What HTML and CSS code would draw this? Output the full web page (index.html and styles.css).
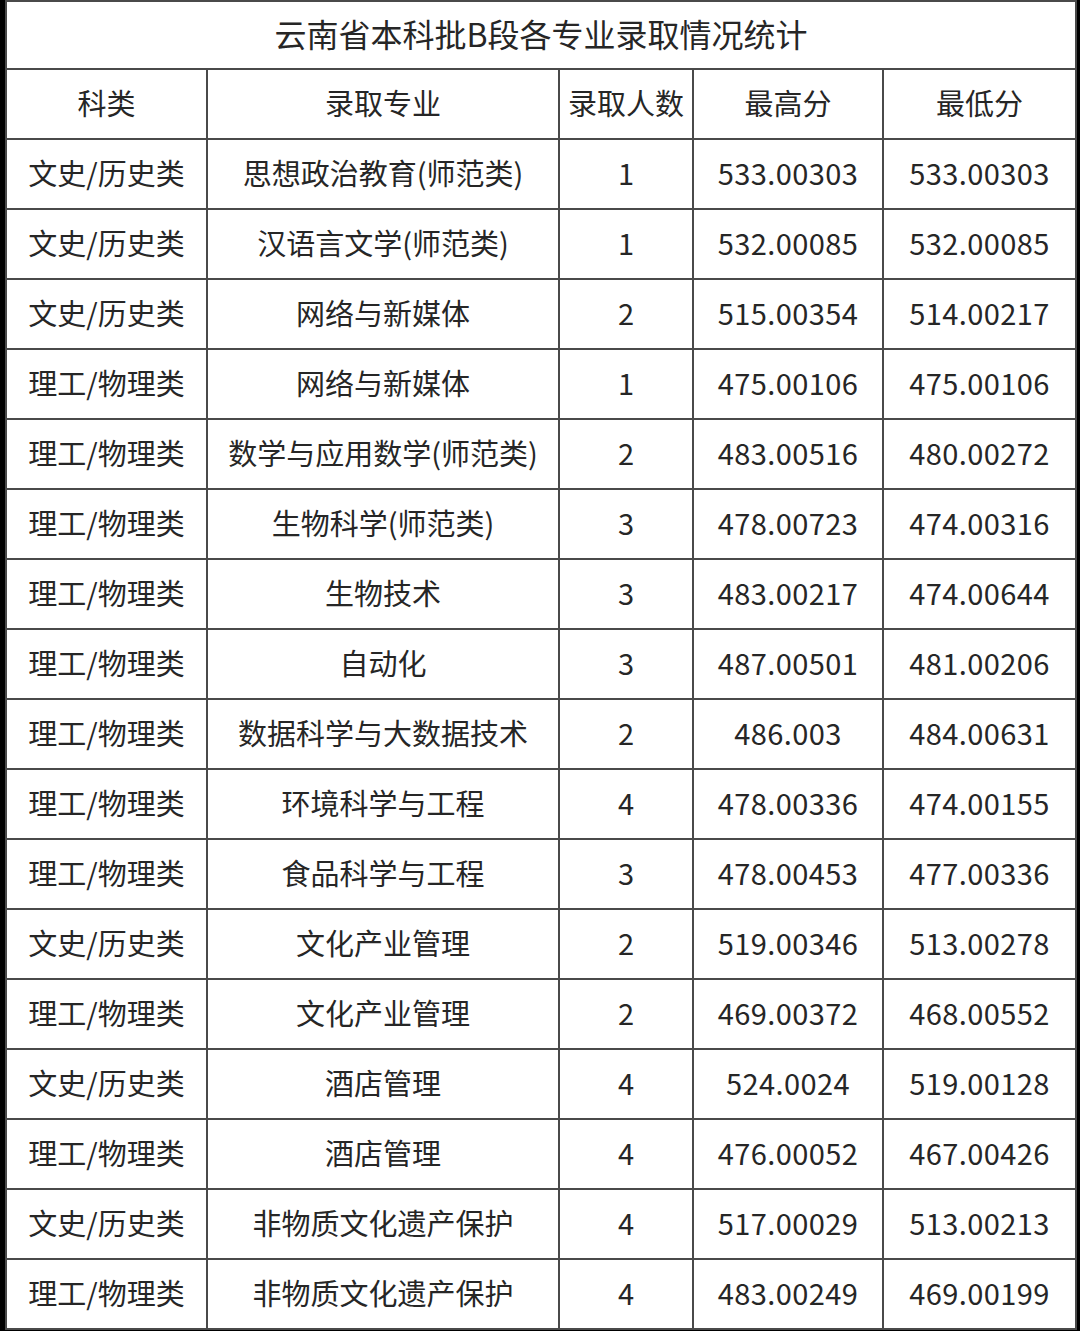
FILE: index.html
```html
<!DOCTYPE html>
<html lang="zh-CN">
<head>
<meta charset="utf-8">
<title>云南省本科批B段各专业录取情况统计</title>
<link rel="stylesheet" href="styles.css">
</head>
<body>
<div class="frame">
<table class="stats">
<colgroup>
<col class="c-type"><col class="c-major"><col class="c-num"><col class="c-max"><col class="c-min">
</colgroup>
<thead>
<tr class="title-row"><th colspan="5" class="title">云南省本科批B段各专业录取情况统计</th></tr>
<tr><th>科类</th><th>录取专业</th><th>录取人数</th><th>最高分</th><th>最低分</th></tr>
</thead>
<tbody>
<tr><td>文史/历史类</td><td>思想政治教育(师范类)</td><td>1</td><td class="n">533.00303</td><td class="n">533.00303</td></tr>
<tr><td>文史/历史类</td><td>汉语言文学(师范类)</td><td>1</td><td class="n">532.00085</td><td class="n">532.00085</td></tr>
<tr><td>文史/历史类</td><td>网络与新媒体</td><td>2</td><td class="n">515.00354</td><td class="n">514.00217</td></tr>
<tr><td>理工/物理类</td><td>网络与新媒体</td><td>1</td><td class="n">475.00106</td><td class="n">475.00106</td></tr>
<tr><td>理工/物理类</td><td>数学与应用数学(师范类)</td><td>2</td><td class="n">483.00516</td><td class="n">480.00272</td></tr>
<tr><td>理工/物理类</td><td>生物科学(师范类)</td><td>3</td><td class="n">478.00723</td><td class="n">474.00316</td></tr>
<tr><td>理工/物理类</td><td>生物技术</td><td>3</td><td class="n">483.00217</td><td class="n">474.00644</td></tr>
<tr><td>理工/物理类</td><td>自动化</td><td>3</td><td class="n">487.00501</td><td class="n">481.00206</td></tr>
<tr><td>理工/物理类</td><td>数据科学与大数据技术</td><td>2</td><td class="n">486.003</td><td class="n">484.00631</td></tr>
<tr><td>理工/物理类</td><td>环境科学与工程</td><td>4</td><td class="n">478.00336</td><td class="n">474.00155</td></tr>
<tr><td>理工/物理类</td><td>食品科学与工程</td><td>3</td><td class="n">478.00453</td><td class="n">477.00336</td></tr>
<tr><td>文史/历史类</td><td>文化产业管理</td><td>2</td><td class="n">519.00346</td><td class="n">513.00278</td></tr>
<tr><td>理工/物理类</td><td>文化产业管理</td><td>2</td><td class="n">469.00372</td><td class="n">468.00552</td></tr>
<tr><td>文史/历史类</td><td>酒店管理</td><td>4</td><td class="n">524.0024</td><td class="n">519.00128</td></tr>
<tr><td>理工/物理类</td><td>酒店管理</td><td>4</td><td class="n">476.00052</td><td class="n">467.00426</td></tr>
<tr><td>文史/历史类</td><td>非物质文化遗产保护</td><td>4</td><td class="n">517.00029</td><td class="n">513.00213</td></tr>
<tr><td>理工/物理类</td><td>非物质文化遗产保护</td><td>4</td><td class="n">483.00249</td><td class="n">469.00199</td></tr>
</tbody>
</table>
</div>
</body>
</html>
```
FILE: styles.css
```css
html, body {
  margin: 0;
  padding: 0;
  background: #000;
}
.frame {
  margin-left: 5px;
  width: 1070px;
  background: #fff;
}
.stats {
  width: 1070px;
  border-collapse: collapse;
  table-layout: fixed;
  font-family: "Noto Sans CJK SC", "Noto Sans", sans-serif;
  font-size: 29px;
  color: #262626;
  background: #fff;
}
.c-type { width: 201px; }
.c-major { width: 352px; }
.c-num { width: 134px; }
.c-max { width: 190px; }
.c-min { width: 193px; }
.stats th, .stats td {
  border: 2px solid #4a4a4a;
  height: 64px;
  padding: 0 0 4px 0;
  text-align: center;
  vertical-align: middle;
  font-weight: normal;
  white-space: nowrap;
  line-height: 1;
}
.stats .n {
  letter-spacing: 0.4px;
}
.stats .title {
  font-size: 32px;
  height: 62px;
}
```
